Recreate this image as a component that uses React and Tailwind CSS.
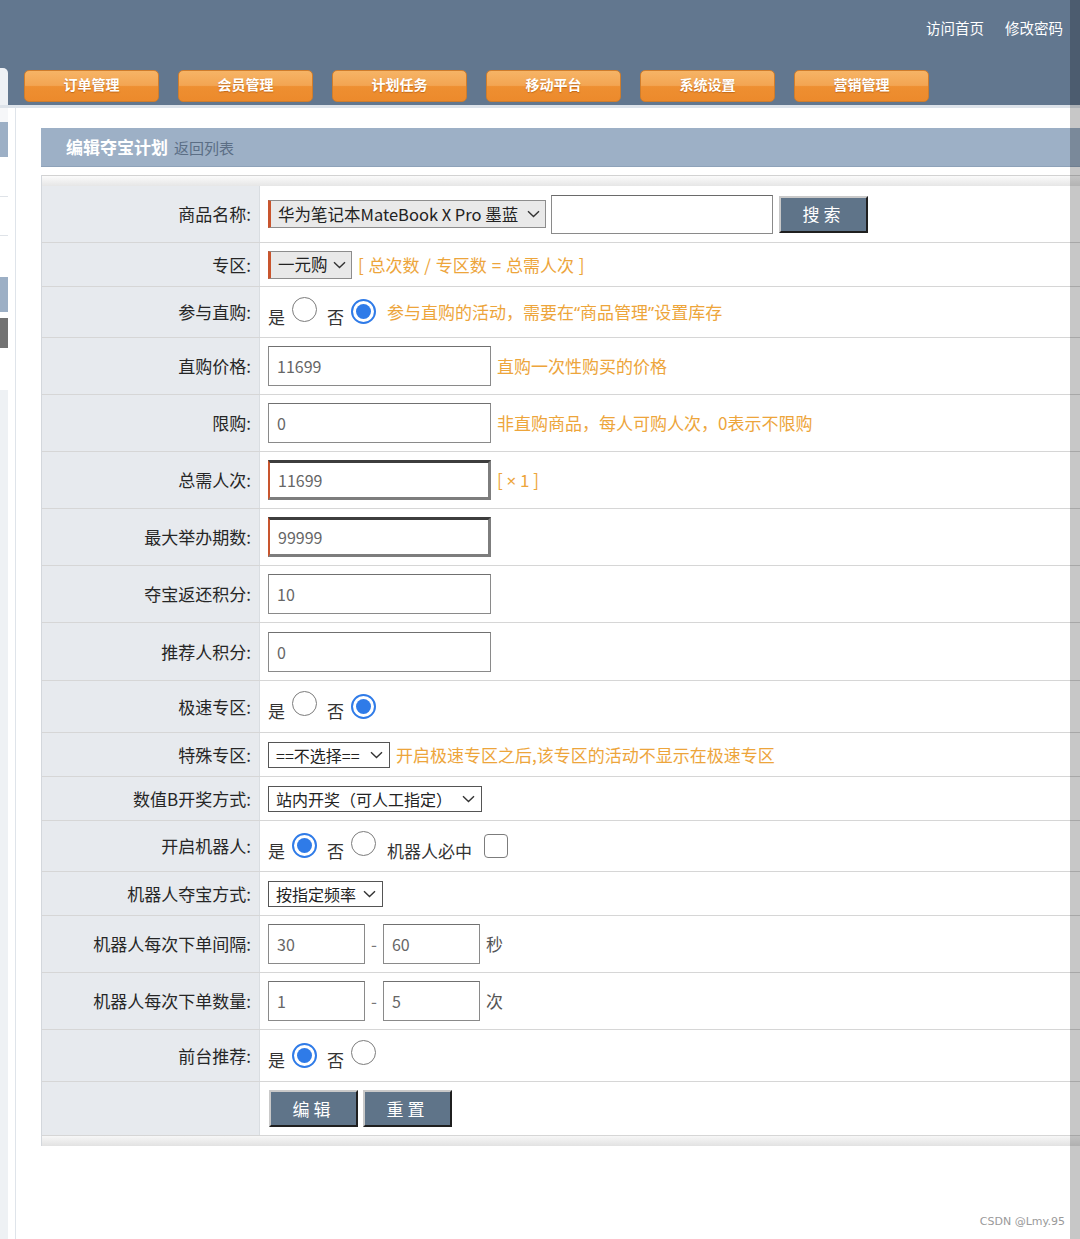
import React from 'react';

const navItems = ['订单管理', '会员管理', '计划任务', '移动平台', '系统设置', '营销管理'];

const Chevron = () => (
  <svg width="13" height="8" viewBox="0 0 13 8" className="shrink-0">
    <path d="M1 1.2l5.5 5.3 5.5-5.3" fill="none" stroke="#333" strokeWidth="1.4" />
  </svg>
);

const Radio = ({ on }) =>
  on ? (
    <span className="inline-flex h-[25px] w-[25px] shrink-0 items-center justify-center rounded-full border-2 border-[#2f7be8] bg-white">
      <span className="h-[15px] w-[15px] rounded-full bg-[#2f7be8]" />
    </span>
  ) : (
    <span className="inline-block h-[25px] w-[25px] shrink-0 rounded-full border-[1.5px] border-[#7c7c7c] bg-white" />
  );

const YesNo = ({ yes, children }) => (
  <div className="flex items-center">
    <span className="mt-[9px]">是</span>
    <span className="ml-[7px]"><Radio on={yes} /></span>
    <span className="ml-[10px] mt-[9px]">否</span>
    <span className="ml-[7px]"><Radio on={!yes} /></span>
    {children}
  </div>
);

const Hint = ({ children, className = '' }) => (
  <span className={`whitespace-nowrap text-[17px] text-[#eda53b] ${className}`}>{children}</span>
);

const Q = ({ children }) => <span className="font-['Noto_Sans',sans-serif]">{children}</span>;

const TextBox = ({ value, w = 'w-[223px]', hot }) => (
  <div
    className={`flex h-[40px] ${w} items-center bg-white pl-[8px] text-[16px] text-[#666] ${
      hot
        ? 'border-t-[3px] border-r-[3px] border-b-[3px] border-l-2 border-t-[#3d3d3d] border-r-[#7d7d7d] border-b-[#7d7d7d] border-l-[#c9552e]'
        : 'border-[1.5px] border-[#8a8a8a] border-t-[#707070]'
    }`}
  >
    {value}
  </div>
);

const GraySelect = ({ text, w }) => (
  <div className={`flex h-[28px] ${w} items-center justify-between border border-[#8d8d8d] border-l-[3px] border-l-[#c9552e] bg-[#e9e9e9] pl-[7px] pr-[5px] text-[16.5px] text-[#222]`}>
    <span className="whitespace-nowrap">{text}</span>
    <Chevron />
  </div>
);

const WhiteSelect = ({ text, w }) => (
  <div className={`flex h-[26px] ${w} items-center justify-between border border-[#555] bg-white pl-[7px] pr-[6px] text-[16px] text-[#222]`}>
    <span className="whitespace-nowrap">{text}</span>
    <Chevron />
  </div>
);

const DarkButton = ({ children, w }) => (
  <button className={`flex h-[37px] ${w} items-center justify-center border-2 border-t-[#c9c9c9] border-l-[#c9c9c9] border-r-[#1f1f1f] border-b-[#1f1f1f] bg-[#5f7489] text-[17px] tracking-[4px] text-white`}>
    {children}
  </button>
);

const rows = [
  {
    label: '商品名称',
    h: 'h-[57px]',
    value: (
      <div className="flex items-center">
        <GraySelect text="华为笔记本MateBook X Pro 墨蓝" w="w-[278px]" />
        <div className="ml-[5px] h-[39px] w-[222px] border-[1.5px] border-[#8a8a8a] border-t-[#6a6a6a] bg-white" />
        <span className="ml-[6px]"><DarkButton w="w-[89px]">搜索</DarkButton></span>
      </div>
    ),
  },
  {
    label: '专区',
    h: 'h-[44px]',
    value: (
      <div className="flex items-center">
        <GraySelect text="一元购" w="w-[84px]" />
        <Hint className="ml-[6px] [word-spacing:1px]">[ 总次数 / 专区数 = 总需人次 ]</Hint>
      </div>
    ),
  },
  {
    label: '参与直购',
    h: 'h-[51px]',
    value: (
      <YesNo yes={false}>
        <Hint className="ml-[11px]">参与直购的活动，需要在<Q>“</Q>商品管理<Q>”</Q>设置库存</Hint>
      </YesNo>
    ),
  },
  {
    label: '直购价格',
    h: 'h-[57px]',
    value: (
      <div className="flex items-center">
        <TextBox value="11699" />
        <Hint className="ml-[6px]">直购一次性购买的价格</Hint>
      </div>
    ),
  },
  {
    label: '限购',
    h: 'h-[57px]',
    value: (
      <div className="flex items-center">
        <TextBox value="0" />
        <Hint className="ml-[6px]">非直购商品，每人可购人次，0表示不限购</Hint>
      </div>
    ),
  },
  {
    label: '总需人次',
    h: 'h-[57px]',
    value: (
      <div className="flex items-center">
        <TextBox value="11699" hot />
        <Hint className="ml-[6px]">[ <span className="font-['Noto_Sans',sans-serif]">×</span> 1 ]</Hint>
      </div>
    ),
  },
  { label: '最大举办期数', h: 'h-[57px]', value: <TextBox value="99999" hot /> },
  { label: '夺宝返还积分', h: 'h-[57px]', value: <TextBox value="10" /> },
  { label: '推荐人积分', h: 'h-[58px]', value: <TextBox value="0" /> },
  { label: '极速专区', h: 'h-[52px]', value: <YesNo yes={false} /> },
  {
    label: '特殊专区',
    h: 'h-[44px]',
    value: (
      <div className="flex items-center">
        <WhiteSelect text="==不选择==" w="w-[122px]" />
        <Hint className="ml-[6px]">开启极速专区之后,该专区的活动不显示在极速专区</Hint>
      </div>
    ),
  },
  { label: '数值B开奖方式', h: 'h-[44px]', value: <WhiteSelect text="站内开奖（可人工指定）" w="w-[214px]" /> },
  {
    label: '开启机器人',
    h: 'h-[51px]',
    value: (
      <YesNo yes>
        <span className="ml-[11px] mt-[9px]">机器人必中</span>
        <span className="ml-[12px] h-[24px] w-[24px] rounded-[4px] border-[1.5px] border-[#7c7c7c] bg-white" />
      </YesNo>
    ),
  },
  { label: '机器人夺宝方式', h: 'h-[44px]', value: <WhiteSelect text="按指定频率" w="w-[115px]" /> },
  {
    label: '机器人每次下单间隔',
    h: 'h-[57px]',
    value: (
      <div className="flex items-center text-[#555]">
        <TextBox value="30" w="w-[97px]" />
        <span className="mx-[6px] text-[#777]">-</span>
        <TextBox value="60" w="w-[97px]" />
        <span className="ml-[6px]">秒</span>
      </div>
    ),
  },
  {
    label: '机器人每次下单数量',
    h: 'h-[57px]',
    value: (
      <div className="flex items-center text-[#555]">
        <TextBox value="1" w="w-[97px]" />
        <span className="mx-[6px] text-[#777]">-</span>
        <TextBox value="5" w="w-[97px]" />
        <span className="ml-[6px]">次</span>
      </div>
    ),
  },
  { label: '前台推荐', h: 'h-[52px]', value: <YesNo yes /> },
  {
    label: '',
    h: 'h-[54px]',
    value: (
      <div className="flex items-center gap-[5px] pl-[1px]">
        <DarkButton w="w-[89px]">编辑</DarkButton>
        <DarkButton w="w-[89px]">重置</DarkButton>
      </div>
    ),
  },
];

export default function App() {
  return (
    <div className="relative min-h-[1239px] w-[1080px] overflow-hidden bg-white font-['Noto_Sans_CJK_SC','Noto_Sans',sans-serif] text-[#333]">
      <header className="flex h-[105px] flex-col bg-[#62778f]">
        <div className="flex justify-end gap-[21px] pr-[17px] pt-[19px] text-[14.5px] leading-[18px] text-white">
          <span>访问首页</span>
          <span>修改密码</span>
        </div>
        <div className="mt-auto flex items-end">
          <div className="h-[37px] w-[8px] rounded-tr-[5px] bg-[#eef1f5]" />
          <div className="mb-[3px] ml-[16px] flex gap-[19px]">
            {navItems.map((item) => (
              <div
                key={item}
                className="flex h-[32px] w-[135px] items-center justify-center rounded-[5px] border border-[#cf7d2c] bg-[linear-gradient(to_bottom,#f6b466_0%,#f3a552_48%,#ee8f31_52%,#ec8a2c_100%)] pb-[5px] text-[14px] font-bold leading-[18px] text-white [text-shadow:0_1px_1px_rgba(150,70,0,0.5)]"
              >
                {item}
              </div>
            ))}
          </div>
        </div>
      </header>
      <div className="h-[3px] bg-[#dde3ea]" />

      <div className="flex">
        <aside className="flex w-[8px] flex-col bg-[#eef1f4]">
          <div className="h-[14px] bg-[#f6f7f9]" />
          <div className="h-[35px] bg-[#9cafc5]" />
          <div className="h-[40px] border-b border-[#dfe3e8] bg-white" />
          <div className="h-[39px] border-b border-[#dfe3e8] bg-white" />
          <div className="h-[41px] bg-white" />
          <div className="h-[35px] bg-[#9cafc5]" />
          <div className="h-[6px] bg-white" />
          <div className="h-[30px] bg-[#727272]" />
          <div className="h-[42px] bg-white" />
        </aside>
        <div className="ml-[7px] w-px bg-[#dfe4ea]" />

        <main className="min-h-[1131px] flex-1 pl-[25px] pt-[20px]">
          <div className="flex h-[39px] items-center border-b border-[#8ea2b9] bg-[#9db0c6] pl-[25px]">
            <span className="text-[17px] font-bold text-white">编辑夺宝计划</span>
            <span className="ml-[6px] mt-[2px] text-[15px] text-[#5b6e85]">返回列表</span>
          </div>

          <div className="mt-[8px] border-l border-[#d3d7dc]">
            <div className="h-[11px] border-t border-[#d2d2d2] bg-[linear-gradient(to_bottom,#fbfbfb,#e6e6e6)]" />
            {rows.map((row, i) => (
              <div key={i} className={`flex ${row.h} border-b border-[#d6d6d6]`}>
                <div className="flex w-[218px] shrink-0 items-center justify-end border-r border-[#d9dde1] bg-[#e7eaee] pr-[8px] text-[17px] text-[#262626]">
                  {row.label ? `${row.label}:` : ''}
                </div>
                <div className="flex flex-1 items-center pl-[8px] text-[17px] text-[#333]">{row.value}</div>
              </div>
            ))}
            <div className="h-[10px] bg-[linear-gradient(to_bottom,#f7f7f7,#e2e2e2)]" />
          </div>
        </main>
      </div>

      <div className="absolute right-0 top-0 h-full w-[10px] bg-black/[0.22]" />
      <span className="absolute bottom-[9px] right-[15px] font-['DejaVu_Sans',sans-serif] text-[11px] text-[#9a9a9a]">CSDN @Lmy.95</span>
    </div>
  );
}
